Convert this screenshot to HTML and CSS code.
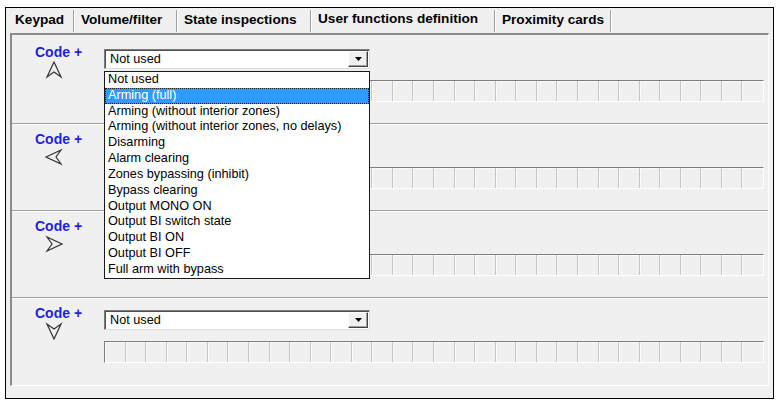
FILE: index.html
```html
<!DOCTYPE html>
<html>
<head>
<meta charset="utf-8">
<link rel="stylesheet" href="styles.css">
</head>
<body>
<div class="window">
  <div class="tabs">
    <div class="tab">Keypad</div>
    <div class="tab">Volume/filter</div>
    <div class="tab">State inspections</div>
    <div class="tab tab-active">User functions definition</div>
    <div class="tab">Proximity cards</div>
  </div>
  <div class="panel">
    <div class="group group-first">
      <div class="label-col">
        <div class="code">Code +</div>
        <svg class="arrow" viewBox="0 0 18 18"><polygon points="9,1 16,16 9,11 2,16"/></svg>
      </div>
      <div class="controls">
        <div class="combo">
          <span class="combo-text">Not used</span>
          <span class="combo-btn"><svg class="tri" viewBox="0 0 7 4"><polygon points="0,0 7,0 3.5,4"/></svg></span>
          <ul class="list">
            <li class="item">Not used</li>
            <li class="item item-sel">Arming (full)</li>
            <li class="item">Arming (without interior zones)</li>
            <li class="item">Arming (without interior zones, no delays)</li>
            <li class="item">Disarming</li>
            <li class="item">Alarm clearing</li>
            <li class="item">Zones bypassing (inhibit)</li>
            <li class="item">Bypass clearing</li>
            <li class="item">Output MONO ON</li>
            <li class="item">Output BI switch state</li>
            <li class="item">Output BI ON</li>
            <li class="item">Output BI OFF</li>
            <li class="item">Full arm with bypass</li>
          </ul>
        </div>
        <div class="cells">
          <span></span><span></span><span></span><span></span><span></span><span></span><span></span><span></span>
          <span></span><span></span><span></span><span></span><span></span><span></span><span></span><span></span>
          <span></span><span></span><span></span><span></span><span></span><span></span><span></span><span></span>
          <span></span><span></span><span></span><span></span><span></span><span></span><span></span><span></span>
        </div>
      </div>
    </div>
    <div class="group">
      <div class="label-col">
        <div class="code">Code +</div>
        <svg class="arrow" viewBox="0 0 18 18"><polygon points="1,9 16,2 11,9 16,16"/></svg>
      </div>
      <div class="controls">
        <div class="combo">
          <span class="combo-text">Not used</span>
          <span class="combo-btn"><svg class="tri" viewBox="0 0 7 4"><polygon points="0,0 7,0 3.5,4"/></svg></span>
        </div>
        <div class="cells">
          <span></span><span></span><span></span><span></span><span></span><span></span><span></span><span></span>
          <span></span><span></span><span></span><span></span><span></span><span></span><span></span><span></span>
          <span></span><span></span><span></span><span></span><span></span><span></span><span></span><span></span>
          <span></span><span></span><span></span><span></span><span></span><span></span><span></span><span></span>
        </div>
      </div>
    </div>
    <div class="group">
      <div class="label-col">
        <div class="code">Code +</div>
        <svg class="arrow" viewBox="0 0 18 18"><polygon points="17,9 2,2 7,9 2,16"/></svg>
      </div>
      <div class="controls">
        <div class="combo">
          <span class="combo-text">Not used</span>
          <span class="combo-btn"><svg class="tri" viewBox="0 0 7 4"><polygon points="0,0 7,0 3.5,4"/></svg></span>
        </div>
        <div class="cells">
          <span></span><span></span><span></span><span></span><span></span><span></span><span></span><span></span>
          <span></span><span></span><span></span><span></span><span></span><span></span><span></span><span></span>
          <span></span><span></span><span></span><span></span><span></span><span></span><span></span><span></span>
          <span></span><span></span><span></span><span></span><span></span><span></span><span></span><span></span>
        </div>
      </div>
    </div>
    <div class="group">
      <div class="label-col">
        <div class="code">Code +</div>
        <svg class="arrow" viewBox="0 0 18 18"><polygon points="9,17 2,2 9,7 16,2"/></svg>
      </div>
      <div class="controls">
        <div class="combo">
          <span class="combo-text">Not used</span>
          <span class="combo-btn"><svg class="tri" viewBox="0 0 7 4"><polygon points="0,0 7,0 3.5,4"/></svg></span>
        </div>
        <div class="cells">
          <span></span><span></span><span></span><span></span><span></span><span></span><span></span><span></span>
          <span></span><span></span><span></span><span></span><span></span><span></span><span></span><span></span>
          <span></span><span></span><span></span><span></span><span></span><span></span><span></span><span></span>
          <span></span><span></span><span></span><span></span><span></span><span></span><span></span><span></span>
        </div>
      </div>
    </div>
  </div>
</div>
</body>
</html>
```

FILE: styles.css
```css
* { box-sizing: border-box; }
html, body { margin: 0; padding: 0; background: #fff; }
body { font-family: "Liberation Sans", Arial, sans-serif; color: #000; }

.window {
  margin: 7px 0 0 5px;
  width: 769px;
  height: 392px;
  border: 1px solid #000;
  background: #f0f0f0;
  display: flex;
  flex-direction: column;
}

.tabs {
  display: grid;
  grid-template-columns: 66px 103px 134px 184px 116px;
  height: 25px;
  padding: 2px 0 0 2px;
}
.tab {
  height: 22px;
  line-height: 19px;
  font-size: 13.6px;
  font-weight: bold;
  padding-left: 7px;
  border-right: 1px solid #a0a0a0;
  box-shadow: 1px 0 0 #fff;
  white-space: nowrap;
}
.tab-active { line-height: 17px; }

.panel {
  margin: 0 4px;
  height: 353px;
  border-top: 2px solid #8c8c8c;
  border-left: 2px solid #8a8a8a;
  border-right: 1px solid #fff;
  border-bottom: 1px solid #fff;
  display: flex;
  flex-direction: column;
}

.group {
  display: flex;
  height: 87px;
  padding-top: 12px;
  border-top: 1px solid #a0a0a0;
  box-shadow: inset 0 1px 0 #fff;
}
.group-first {
  height: 88px;
  padding-top: 14px;
  border-top: 0;
  box-shadow: none;
  position: relative;
  z-index: 2;
}

.label-col {
  width: 92px;
  padding-left: 23px;
  margin-top: -5px;
}
.code {
  font-size: 14px;
  line-height: 16px;
  font-weight: bold;
  color: #1f1fe0;
  white-space: nowrap;
}
.arrow {
  display: block;
  width: 18px;
  height: 18px;
  margin: 1px 0 0 10px;
  fill: none;
  stroke: #333;
  stroke-width: 1.2;
  stroke-linejoin: miter;
}

.controls { width: 660px; }

.combo {
  position: relative;
  display: flex;
  width: 266px;
  height: 20px;
  background: #fff;
  border: 1px solid;
  border-color: #7a7a7a #dcdcdc #dcdcdc #7a7a7a;
  box-shadow: inset 1px 1px 0 #505050;
  padding: 1px 1px 1px 0;
  font-size: 12.7px;
}
.combo-text {
  flex: 1;
  padding-left: 5px;
  line-height: 17px;
  white-space: nowrap;
}
.combo-btn {
  width: 20px;
  background: #f0f0f0;
  border: 1px solid;
  border-color: #fff #404040 #404040 #fff;
  box-shadow: inset -1px -1px 0 #a0a0a0;
  display: flex;
  align-items: center;
  justify-content: center;
}
.tri { width: 7px; height: 4px; fill: #000; }

.list {
  position: absolute;
  left: -1px;
  top: 21px;
  width: 266px;
  margin: 0;
  padding: 0;
  list-style: none;
  background: #fff;
  border: 1px solid #1a1a1a;
  z-index: 5;
}
.item {
  height: 15.83px;
  line-height: 15.83px;
  padding-left: 3px;
  white-space: nowrap;
  font-size: 12.7px;
}
.item-sel {
  background: #3399ff;
  color: #fff;
  outline: 1px dotted #222;
  outline-offset: -1px;
}

.cells {
  margin-top: 11px;
  height: 22px;
  display: grid;
  grid-template-columns: repeat(32, 1fr);
  border: 1px solid;
  border-color: #7e7e7e #fff #fff #7e7e7e;
  box-shadow: inset 1px 1px 0 #a8a8a8;
}
.cells span {
  border-right: 1px solid #c6c6c6;
  box-shadow: inset 1px 1px 0 #fafafa;
}
.cells span:last-child { border-right: 0; }
```
